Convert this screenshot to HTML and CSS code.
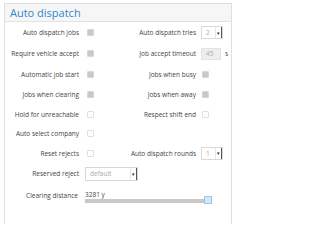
FILE: index.html
```html
<!DOCTYPE html>
<html>
<head>
<meta charset="utf-8">
<link rel="stylesheet" href="styles.css">
</head>
<body>
<div class="panel">
  <div class="panel-head">Auto dispatch</div>
  <div class="form">
    <div class="lbl">Auto dispatch jobs</div>
    <div class="ctl"><span class="cb on"></span></div>
    <div class="lbl">Auto dispatch tries</div>
    <div class="ctl"><span class="sel small"><span class="val">2</span><span class="btn">&#9662;</span></span></div>

    <div class="lbl">Require vehicle accept</div>
    <div class="ctl"><span class="cb on"></span></div>
    <div class="lbl">Job accept timeout</div>
    <div class="ctl"><span class="inp">45</span><span class="unit">s</span></div>

    <div class="lbl">Automatic job start</div>
    <div class="ctl"><span class="cb on"></span></div>
    <div class="lbl">Jobs when busy</div>
    <div class="ctl"><span class="cb r on"></span></div>

    <div class="lbl">Jobs when clearing</div>
    <div class="ctl"><span class="cb on"></span></div>
    <div class="lbl">Jobs when away</div>
    <div class="ctl"><span class="cb r on"></span></div>

    <div class="lbl">Hold for unreachable</div>
    <div class="ctl"><span class="cb"></span></div>
    <div class="lbl">Respect shift end</div>
    <div class="ctl"><span class="cb r"></span></div>

    <div class="lbl">Auto select company</div>
    <div class="ctl"><span class="cb"></span></div>
    <div class="lbl"></div>
    <div class="ctl"></div>

    <div class="lbl">Reset rejects</div>
    <div class="ctl"><span class="cb"></span></div>
    <div class="lbl">Auto dispatch rounds</div>
    <div class="ctl"><span class="sel small"><span class="val">1</span><span class="btn">&#9662;</span></span></div>

    <div class="lbl">Reserved reject</div>
    <div class="ctl span3"><span class="sel wide"><span class="val">default</span><span class="btn">&#9662;</span></span></div>

    <div class="lbl">Clearing distance</div>
    <div class="ctl span3 col">
      <span class="dist">3281 y</span>
      <span class="slider"><span class="handle"></span></span>
    </div>
  </div>
</div>
</body>
</html>
```

FILE: styles.css
```css
html, body {
  margin: 0;
  padding: 0;
  background: #fff;
}
body {
  font-family: "Open Sans", sans-serif;
  color: #444;
  padding: 3px 0 0 4px;
}
.panel {
  width: 226px;
  height: 220px;
  border: 1px solid #dedede;
  border-bottom: none;
}
.panel-head {
  height: 17px;
  line-height: 17px;
  background: #f6f6f6;
  border-bottom: 1px solid #e2e2e2;
  color: #2f86cf;
  font-size: 11px;
  padding-left: 5px;
}
.form {
  display: grid;
  grid-template-columns: 78px 38px 80px 1fr;
  grid-template-rows: 21px 21px 20px 20px 20px 19px 20px 21px 22px;
  font-size: 6.5px;
}
.lbl {
  display: flex;
  align-items: center;
  justify-content: flex-end;
  padding-right: 4px;
  white-space: nowrap;
}
.form > .lbl:nth-child(4n+3) {
  padding-right: 5px;
}
.ctl {
  display: flex;
  align-items: center;
}
.span3 {
  grid-column: 2 / span 3;
}
.col {
  flex-direction: column;
  align-items: flex-start;
  justify-content: flex-start;
  padding-top: 6px;
}
.cb {
  width: 5px;
  height: 5px;
  border: 1px solid #e0e0e0;
  border-radius: 1px;
  background: #fff;
  margin-left: 4px;
}
.cb.r {
  margin-left: 1px;
}
.cb.on {
  background: #c9c9c9;
  border-color: #d6d6d6;
}
.sel {
  display: flex;
  align-items: stretch;
  border: 1px solid #d8d8d8;
  background: #fff;
  height: 13px;
  box-sizing: border-box;
  color: #aaa;
}
.sel.small {
  width: 22px;
}
.sel.wide {
  width: 53px;
  height: 14px;
  margin-left: 2px;
}
.sel .val {
  flex: 1;
  display: flex;
  align-items: center;
  padding-left: 4px;
}
.sel .btn {
  width: 5px;
  border-left: 1px solid #e6e6e6;
  border-right: 1px solid #555;
  display: flex;
  align-items: center;
  justify-content: center;
  color: #222;
  font-size: 5px;
}
.inp {
  width: 20px;
  height: 12px;
  box-sizing: border-box;
  background: #eeeeee;
  border: 1px solid #e4e4e4;
  color: #aaa;
  display: flex;
  align-items: center;
  padding-left: 4px;
}
.unit {
  margin-left: 4px;
}
.dist {
  line-height: 9px;
  margin-left: 2px;
}
.slider {
  position: relative;
  width: 122px;
  height: 4px;
  background: #c8c8c8;
  margin-top: 0;
  margin-left: 2px;
}
.handle {
  position: absolute;
  right: -5px;
  top: -3px;
  width: 6px;
  height: 6px;
  background: #d4e7f7;
  border: 1px solid #9cc6ea;
}
```
